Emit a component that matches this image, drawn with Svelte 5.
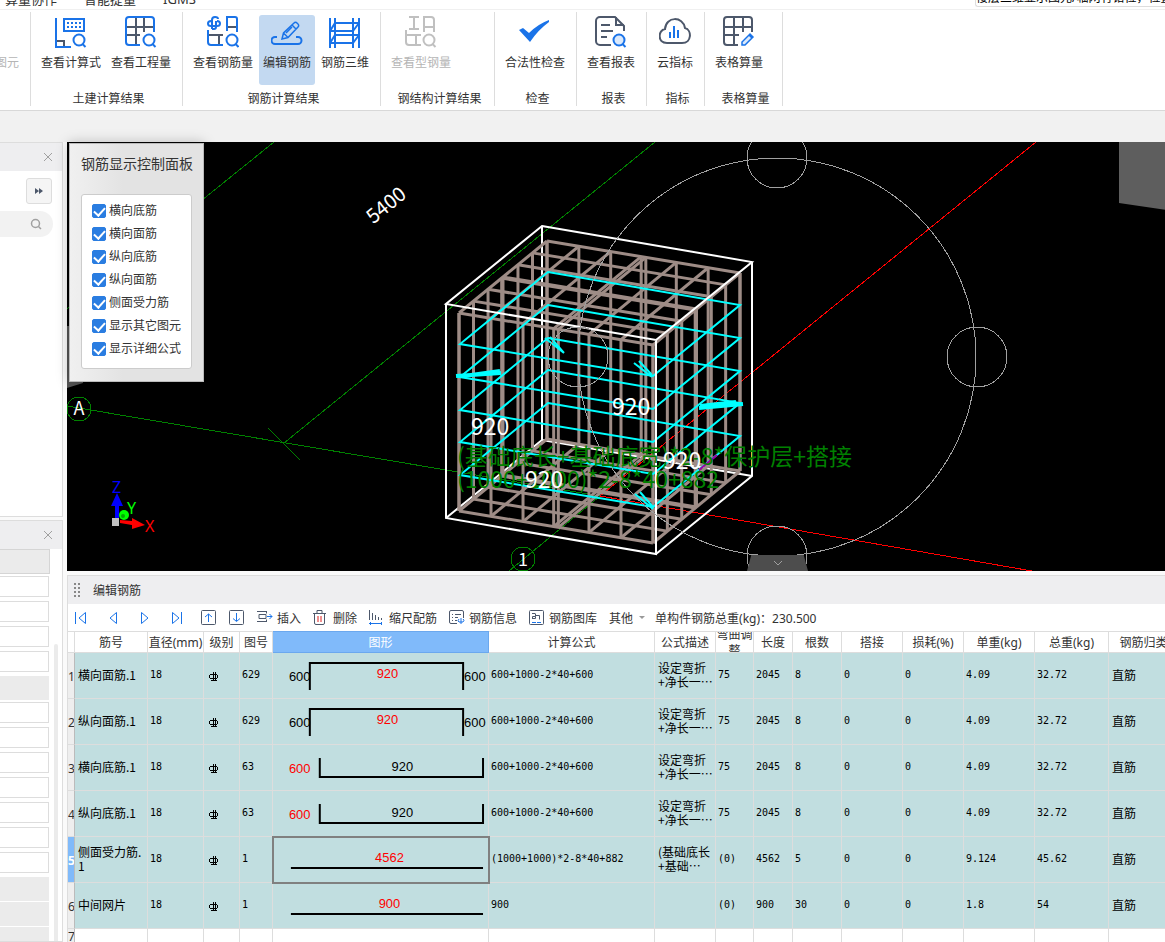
<script>
  const ribbonGroups = [
    { label: '土建计算结果', width: 152, items: [
      { label: '查看计算式', icon: 'formula' },
      { label: '查看工程量', icon: 'quantity' }
    ] },
    { label: '钢筋计算结果', width: 198, items: [
      { label: '查看钢筋量', icon: 'rebar' },
      { label: '编辑钢筋', icon: 'edit', active: true },
      { label: '钢筋三维', icon: 'rebar3d' }
    ] },
    { label: '钢结构计算结果', width: 114, items: [
      { label: '查看型钢量', icon: 'steel', disabled: true }
    ] },
    { label: '检查', width: 82, items: [{ label: '合法性检查', icon: 'check' }] },
    { label: '报表', width: 70, items: [{ label: '查看报表', icon: 'report' }] },
    { label: '指标', width: 58, items: [{ label: '云指标', icon: 'cloud' }] },
    { label: '表格算量', width: 78, items: [{ label: '表格算量', icon: 'sheet' }] }
  ];

  let layers = $state([
    { label: '横向底筋', on: true },
    { label: '横向面筋', on: true },
    { label: '纵向底筋', on: true },
    { label: '纵向面筋', on: true },
    { label: '侧面受力筋', on: true },
    { label: '显示其它图元', on: true },
    { label: '显示详细公式', on: true }
  ]);

  // property grid: i = input, g = group heading
  const props = ['i', 'i', 'i', 'i', 'g', 'i', 'i', 'i', 'i', 'i', 'i', 'i', 'g', 'g', 'g'];

  const tools = [
    { label: '插入', icon: 'insert' },
    { label: '删除', icon: 'remove' },
    { label: '缩尺配筋', icon: 'scale' },
    { label: '钢筋信息', icon: 'info' },
    { label: '钢筋图库', icon: 'library' }
  ];

  const columns = [
    { title: '', width: 7 },
    { title: '筋号', width: 73 },
    { title: '直径(mm)', width: 56 },
    { title: '级别', width: 36 },
    { title: '图号', width: 33 },
    { title: '图形', width: 216, current: true },
    { title: '计算公式', width: 166 },
    { title: '公式描述', width: 61 },
    { title: '弯曲调整', width: 38 },
    { title: '长度', width: 39 },
    { title: '根数', width: 49 },
    { title: '搭接', width: 61 },
    { title: '损耗(%)', width: 61 },
    { title: '单重(kg)', width: 71 },
    { title: '总重(kg)', width: 74 },
    { title: '钢筋归类', width: 70 }
  ];

  const straight = '600+1000-2*40+600';
  const rows = [
    { name: '横向面筋.1', code: '629', value: '920', formula: straight, desc: ['设定弯折', '+净长一…'], bend: '75', length: '2045', count: '8', unit: '4.09', total: '32.72' },
    { name: '纵向面筋.1', code: '629', value: '920', formula: straight, desc: ['设定弯折', '+净长一…'], bend: '75', length: '2045', count: '8', unit: '4.09', total: '32.72' },
    { name: '横向底筋.1', code: '63', value: '920', formula: straight, desc: ['设定弯折', '+净长一…'], bend: '75', length: '2045', count: '8', unit: '4.09', total: '32.72' },
    { name: '纵向底筋.1', code: '63', value: '920', formula: straight, desc: ['设定弯折', '+净长一…'], bend: '75', length: '2045', count: '8', unit: '4.09', total: '32.72' },
    { name: '侧面受力筋.1', code: '1', value: '4562', formula: '(1000+1000)*2-8*40+882', desc: ['(基础底长', '+基础…'], bend: '(0)', length: '4562', count: '5', unit: '9.124', total: '45.62', selected: true },
    { name: '中间网片', code: '1', value: '900', formula: '900', desc: [], bend: '(0)', length: '900', count: '30', unit: '1.8', total: '54' }
  ];

  // rebar cage, built from its four top corners
  const a = [547, 241];
  const b = [740, 273];
  const c = [653, 345];
  const d = [459, 313];
  const drop = 198;
  const lerp = (p, q, t) => [p[0] + (q[0] - p[0]) * t, p[1] + (q[1] - p[1]) * t];
  const longSteps = [0, 0.165, 0.33, 0.488, 0.512, 0.67, 0.835, 1];
  const sideSteps = [0, 0.165, 0.33, 0.5, 0.515, 0.67, 0.835, 1];

  const bars = [];
  for (const t of longSteps) {
    const back = lerp(a, b, t);
    const front = lerp(d, c, t);
    for (const y of [0, drop]) {
      bars.push([back[0], back[1] + y, front[0], front[1] + y]);
    }
    bars.push([...back, back[0], back[1] + drop], [...front, front[0], front[1] + drop]);
  }
  for (const t of sideSteps) {
    const left = lerp(a, d, t);
    const right = lerp(b, c, t);
    for (const y of [0, drop]) {
      bars.push([left[0], left[1] + y, right[0], right[1] + y]);
    }
    bars.push([...left, left[0], left[1] + drop], [...right, right[0], right[1] + drop]);
  }

  const hoops = [0, 1, 2, 3, 4].map((i) => {
    const y = Math.round(i * 32.8);
    return `548,${272 + y} 740,${305 + y} 653,${376 + y} 460,${344 + y}`;
  });
</script>

{#snippet lens(x, y)}
  <circle cx={x} cy={y} r="5.5" />
  <path d="M{x + 3.5} {y + 4}l3 3" />
{/snippet}

{#snippet ribbonIcon(name)}
  <svg class="big-icon" viewBox="0 0 32 32" aria-hidden="true">
    {#if name === 'formula'}
      <g class="blue">
        <path d="M1 2v29h15M9 3h20v12H9z" />
        <path stroke-dasharray="2 2" d="M12 7h14M12 11h14" />
        {@render lens(24, 24)}
      </g>
      <path class="dark" d="M2 25h7v5" />
    {:else if name === 'quantity'}
      <path class="dark" d="M11 2v26M19 2v14M2 11h27M2 19h13" />
      <g class="blue">
        <path d="M15 29H4a3 3 0 0 1-3-3V4a3 3 0 0 1 3-3h22a3 3 0 0 1 3 3v12" />
        {@render lens(24, 24)}
      </g>
    {:else if name === 'rebar'}
      <path class="dark" d="M20 11h10M2 19h14M12 19v10" />
      <g class="blue">
        <path d="M5 13V4q0-3 3-3t3 2M5 13h2q2 0 2-2V5M4 5Q1 5 1 7.500T4 10h6q3 0 3-2.500T10 5" />
        <path d="M20 15V1h8a2 2 0 0 1 2 2v13M1 14v12a3 3 0 0 0 3 3h12" />
        {@render lens(25, 24)}
      </g>
    {:else if name === 'edit'}
      <g class="blue">
        <path d="M6 21H4a3 3 0 0 0 0 7h23a3 3 0 0 0 0-7h-2" />
        <path class="thin" d="M11 23l1.500-6L23 7a2 2 0 0 1 3 0l1 1a2 2 0 0 1 0 3L17 21.500zM21 9l4 4M12.500 17l4 4M15 17l6-6" />
      </g>
    {:else if name === 'rebar3d'}
      <path class="blue" d="M1 2v30M6 2v30M24 2v30M30 2v30M6 7h24M1 15h24M6 19h24M1 27h24M1 15l5-8M1 27l5-8M24 15l6-8M24 27l6-8" />
    {:else if name === 'steel'}
      <g class="faded">
        <path d="M4 1h10M9 1v12M4 13h10M19 16V1h7a3 3 0 0 1 3 3v12M19 11h10M1 14v12a3 3 0 0 0 3 3h12M1 19h15M11 19v10" />
        {@render lens(24, 24)}
      </g>
    {:else if name === 'check'}
      <path fill="#1a73e8" d="M0 14l4-2 6 5Q19 8 30 4v2Q19 14 11 26z" />
    {:else if name === 'report'}
      <path class="dark" d="M16 29H5a4 4 0 0 1-4-4V5a4 4 0 0 1 4-4h15l9 9v5M21 1v8h8M6 9h9M6 15h12M6 21h6" />
      <g class="blue tinted">{@render lens(24, 24)}</g>
    {:else if name === 'cloud'}
      <path class="dark" d="M8 27C-2 27-1 14 6 13 7 0 24 0 26 12c7 2 7 15-3 15z" />
      <path class="blue" d="M11 16v6M15 10v12M19 14v8" />
    {:else if name === 'sheet'}
      <path class="dark" d="M15 29H4a3 3 0 0 1-3-3V4a3 3 0 0 1 3-3h22a3 3 0 0 1 3 3v12M11 2v26M20 2v14M2 11h27M2 19h14" />
      <path class="blue thin" fill="#dbe9fb" d="M19 29v-3l8-8 3 3-8 8zM26 19l3 3" />
    {/if}
  </svg>
{/snippet}

{#snippet toolIcon(name)}
  <svg class="small-icon" viewBox="0 0 16 16" aria-hidden="true">
    {#if name === 'first'}
      <path class="nav" d="M2.500 2v12M12.500 2.500v11L6 8z" />
    {:else if name === 'prev'}
      <path class="nav" d="M11.500 2.500v11L5 8z" />
    {:else if name === 'next'}
      <path class="nav" d="M4.500 2.500v11L11 8z" />
    {:else if name === 'last'}
      <path class="nav" d="M12.500 2v12M3.500 2.500v11L10 8z" />
    {:else if name === 'up'}
      <rect class="line" x="0.500" y="0.500" width="14" height="14" rx="1" />
      <path class="nav" d="M7.500 12V4M4 7l3.500-3L11 7" />
    {:else if name === 'down'}
      <rect class="line" x="0.500" y="0.500" width="14" height="14" rx="1" />
      <path class="nav" d="M7.500 3v8M4 8.500l3.500 3 3.500-3" />
    {:else if name === 'insert'}
      <path class="line" d="M0 1.500h10M0 11.500h10M2 4.500h7v4H2zM9.500 1.500v2M9.500 9.500v2" />
      <path class="nav" d="M10 6.500h5M12.500 4l2.500 2.500L12.500 9" />
    {:else if name === 'remove'}
      <path class="line" d="M0 3.500h13M4 3V.500h5V3M1.500 4v9a1.500 1.500 0 0 0 1.500 1.500h7a1.500 1.500 0 0 0 1.500-1.500V4" />
      <path class="danger" d="M5 6v6M8 6v6" />
    {:else if name === 'scale'}
      <path class="line" d="M.500 0v10M3.500 3v7M6.500 5v5M9.500 7v3M12.500 8v2" />
      <path class="nav" d="M0 13.500h13M1.500 12v3M12.500 12v3" />
    {:else if name === 'info'}
      <path class="line" d="M8 13.500H2a1.500 1.500 0 0 1-1.500-1.500V2A1.500 1.500 0 0 1 2 .500h11A1.500 1.500 0 0 1 14.500 2v6M3 4.500h1M6 4.500h6M3 7.500h1M6 7.500h3M3 10.500h1M6 10.500h2" />
      <path class="nav" d="M12 8v6M10 9q-2 2 0 3h4q2-2 0-3" />
    {:else if name === 'library'}
      <rect class="line" x="0.500" y="0.500" width="14" height="14" rx="1" />
      <path class="line" d="M3 3.500h3M3.500 9V6.500h3v-3M3.500 8.500h3v-2M6.500 5.500h4v4" />
      <path class="nav" stroke-dasharray="4 1" d="M3 12.500h9" />
    {/if}
  </svg>
{/snippet}

{#snippet shape(row)}
  <svg class="shape" viewBox="0 0 216 45" role="img" aria-label="图形 {row.value}">
    {#if row.code === '629'}
      <path d="M37 37V10h154v27" />
      <text x="16" y="28">600</text>
      <text class="key" x="115" y="25" text-anchor="middle">{row.value}</text>
      <text x="192" y="28">600</text>
    {:else if row.code === '63'}
      <path d="M47 13v19h164V13" />
      <text class="key" x="16" y="28">600</text>
      <text x="130" y="26" text-anchor="middle">{row.value}</text>
    {:else}
      <path d="M18 31h193" />
      <text class="key" x="117" y="25" text-anchor="middle">{row.value}</text>
    {/if}
  </svg>
{/snippet}

<div class="app">
  <nav class="menu">
    <a href="#collab">算量协作</a>
    <a href="#smart">智能提量</a>
    <a href="#igms">IGMS</a>
    <span class="hint">楼层三维显示图元/轴网有错位，位置</span>
  </nav>

  <header class="ribbon">
    <div class="group clipped"><button class="big" disabled>图元</button></div>
    {#each ribbonGroups as group}
      <div class="group" style:width="{group.width}px">
        <div class="group-items">
          {#each group.items as item}
            <button class="big" class:active={item.active} disabled={item.disabled}>
              {@render ribbonIcon(item.icon)}
              <span>{item.label}</span>
            </button>
          {/each}
        </div>
        <div class="group-label">{group.label}</div>
      </div>
    {/each}
  </header>

  <main>
    <aside>
      <section class="dock list-dock">
        <div class="dock-head">
          <button class="close" aria-label="关闭"><svg viewBox="0 0 10 10"><path d="M1 1l8 8M9 1L1 9" /></svg></button>
        </div>
        <button class="expand" aria-label="展开">
          <svg viewBox="0 0 8 6"><path d="M0 0l4 3-4 3zM4 0l4 3-4 3z" /></svg>
        </button>
        <div class="search">
          <svg viewBox="0 0 12 12" aria-hidden="true"><circle cx="5.500" cy="5.500" r="4" /><path d="M8.500 8.500l2.500 2.500" /></svg>
        </div>
      </section>
      <section class="dock prop-dock">
        <div class="dock-head">
          <button class="close" aria-label="关闭"><svg viewBox="0 0 10 10"><path d="M1 1l8 8M9 1L1 9" /></svg></button>
        </div>
        <div class="prop-body">
          <div class="props">
            <div class="prop-title"></div>
            {#each props as kind}
              {#if kind === 'i'}
                <input class="prop" type="text" aria-label="属性值" />
              {:else}
                <div class="prop-group"></div>
              {/if}
            {/each}
          </div>
          <div class="scroll"></div>
        </div>
      </section>
    </aside>

    <div class="work">
      <div class="viewport">
        <svg class="scene" viewBox="67 142 1098 429" preserveAspectRatio="xMinYMin slice">
          <path fill="#5e5e5e" d="M1119 142h600v150l-600-89z" />
          <path fill="#555" d="M67 326h16v57l-16 5z" />

          <g class="axis">
            <path d="M274 142L67 309M655 142L284 443M268 428l32 32M67 406l533 90L509 571" />
            <circle cx="79" cy="409" r="12" />
            <circle cx="523" cy="559" r="12" />
          </g>
          <path class="origin" d="M1036 142L600 496l432 75" />
          <path class="box" d="M542 226v214M542 440l210 36M542 440l-96 78" />

          <g class="cage">
            {#each bars as [x1, y1, x2, y2]}
              <line {x1} {y1} {x2} {y2} />
            {/each}
          </g>
          <g class="hoops">
            {#each hoops as points}
              <polygon {points} />
            {/each}
            <path d="M545 338l19 15M550 337l14 16M634 363l18 14M639 361l13 14M635 494l18 15M640 492l13 15" />
            <path class="hook" d="M456 376l45-3M699 408l44-4M464 376l36-5M700 406l36-4" />
          </g>
          <path stroke="#a000a0" stroke-width="2" d="M699 470l18-15" />
          <path class="box" d="M542 226l210 36-96 78-210-36zM446 304v214l210 36V340M656 554l96-78V262" />

          <g class="orbit">
            <circle cx="777" cy="357" r="199" />
            <circle cx="777" cy="158" r="30" />
            <circle cx="977" cy="357" r="30" />
            <circle cx="777" cy="556" r="30" />
            <circle cx="578" cy="357" r="30" />
          </g>

          <g class="formula-text">
            <text x="457" y="465">(基础底长+基础底宽)*2-8*保护层+搭接</text>
            <text x="457" y="488">(1000+1000)*2-8*40+882</text>
          </g>
          <g class="dim">
            <text x="471" y="435">920</text>
            <text x="612" y="415">920</text>
            <text x="525" y="488">920</text>
            <text x="663" y="469">920</text>
            <text class="tag" x="79" y="415">A</text>
            <text class="tag" x="523" y="566">1</text>
            <text class="span" transform="translate(386 205) rotate(-39)" y="7">5400</text>
          </g>

          <g class="gizmo">
            <path fill="#00f" d="M115 519v-13h-4l6-13 6 13h-4v13z" />
            <circle cx="124" cy="515" r="5" fill="#0f0" />
            <circle cx="123" cy="516" r="2" fill="#0a0" />
            <path fill="#f00" d="M120 520l12 1v-3l13 7-13 4v-4l-12-2z" />
            <path fill="#c0c0c0" d="M112 518h7v8h-7z" />
            <text x="112" y="493" fill="#00f">Z</text>
            <text x="127" y="514" fill="#0f0">Y</text>
            <text x="145" y="532" fill="#f00">X</text>
          </g>
        </svg>

        <div class="panel">
          <h2>钢筋显示控制面板</h2>
          <div class="layers">
            {#each layers as layer}
              <label><input type="checkbox" bind:checked={layer.on} />{layer.label}</label>
            {/each}
          </div>
        </div>

        <button class="fold" aria-label="收起">
          <svg viewBox="0 0 10 6"><path d="M1 1l4 4 4-4" /></svg>
        </button>
      </div>

      <section class="editor">
        <div class="editor-head">
          <svg class="grip" viewBox="0 0 6 14" aria-hidden="true">
            <path d="M0 0h2v2H0zM4 0h2v2H4zM0 4h2v2H0zM4 4h2v2H4zM0 8h2v2H0zM4 8h2v2H4zM0 12h2v2H0zM4 12h2v2H4z" />
          </svg>
          <span>编辑钢筋</span>
        </div>

        <div class="toolbar">
          <div class="navs">
            <button aria-label="第一条">{@render toolIcon('first')}</button>
            <button aria-label="上一条">{@render toolIcon('prev')}</button>
            <button aria-label="下一条">{@render toolIcon('next')}</button>
            <button aria-label="最后一条">{@render toolIcon('last')}</button>
            <button aria-label="上移">{@render toolIcon('up')}</button>
          </div>
          <button aria-label="下移">{@render toolIcon('down')}</button>
          {#each tools as tool}
            <button>{@render toolIcon(tool.icon)}<span>{tool.label}</span></button>
          {/each}
          <button class="more"><span>其他</span><i class="caret"></i></button>
          <span class="sum">单构件钢筋总重(kg)：230.500</span>
        </div>

        <div class="grid-wrap">
          <table>
            <colgroup>
              {#each columns as col}
                <col style:width="{col.width}px" />
              {/each}
            </colgroup>
            <thead>
              <tr>
                {#each columns as col}
                  <th class:current={col.current}><div>{col.title}</div></th>
                {/each}
              </tr>
            </thead>
            <tbody>
              {#each rows as row, i}
                <tr>
                  <th class:current={row.selected}>{i + 1}</th>
                  <td class="zh">{row.name}</td>
                  <td>18</td>
                  <td class="grade">
                    <svg viewBox="0 0 9 9" role="img" aria-label="三级钢"><path d="M4.500 0v8M6.500 0v8M2 8.500h6M1.500 2.500h6l1 1v2l-1 1h-6l-1-1v-2z" /></svg>
                  </td>
                  <td>{row.code}</td>
                  <td class="figure" class:selected={row.selected}>{@render shape(row)}</td>
                  <td>{row.formula}</td>
                  <td class="zh">{#each row.desc as line}<div>{line}</div>{/each}</td>
                  <td>{row.bend}</td>
                  <td>{row.length}</td>
                  <td>{row.count}</td>
                  <td>0</td>
                  <td>0</td>
                  <td>{row.unit}</td>
                  <td>{row.total}</td>
                  <td class="zh">直筋</td>
                </tr>
              {/each}
              <tr class="blank">
                <th>7</th>
                {#each columns.slice(1) as _}<td></td>{/each}
              </tr>
            </tbody>
          </table>
        </div>
      </section>
    </div>
  </main>
</div>

<style>
  :global(body) {
    margin: 0;
  }

  * {
    box-sizing: border-box;
  }

  .app {
    display: flex;
    flex-direction: column;
    height: 100vh;
    overflow: hidden;
    background: #f1f1f1;
    color: #333;
    font: 12px/16px 'Noto Sans', 'Noto Sans CJK SC', sans-serif;
  }

  button {
    padding: 0;
    border: none;
    background: none;
    color: inherit;
    font: inherit;
  }

  svg {
    display: block;
    fill: none;
  }

  /* menu strip */
  .menu {
    flex: none;
    display: flex;
    align-items: flex-end;
    gap: 27px;
    height: 10px;
    padding: 0 0 2px 5px;
    border-bottom: 1px solid #f0f0f0;
    background: #fff;
    font-size: 13px;
    white-space: nowrap;
    overflow: hidden;
  }

  .menu a {
    color: #333;
    text-decoration: none;
  }

  .hint {
    width: 190px;
    margin-left: auto;
    border: 1px solid #ddd;
    border-right: none;
    border-radius: 3px 0 0 3px;
    color: #000;
    font-size: 12px;
  }

  /* ribbon */
  .ribbon {
    flex: none;
    display: flex;
    height: 101px;
    padding: 2px 0 4px;
    border-bottom: 1px solid #d8d8d8;
    background: #fff;
  }

  .group {
    display: flex;
    flex-direction: column;
    flex: none;
    padding: 3px 0 0 6px;
    border-right: 1px solid #ddd;
  }

  .clipped {
    align-items: flex-end;
    width: 31px;
    overflow: hidden;
  }

  .group-items {
    display: flex;
    gap: 2px;
  }

  .big {
    display: flex;
    flex-direction: column;
    align-items: center;
    gap: 7px;
    height: 70px;
    padding: 1px 4px 0;
    border-radius: 3px;
    white-space: nowrap;
  }

  .clipped .big {
    padding-top: 40px;
    padding-right: 11px;
  }

  .big.active {
    background: #c3d9f1;
  }

  .big:disabled {
    color: #b5b5b5;
  }

  .big-icon {
    width: 32px;
    height: 32px;
    stroke-width: 2;
  }

  .blue {
    stroke: #1a73e8;
  }

  .dark {
    stroke: #4d586b;
  }

  .faded {
    stroke: #c0c0c0;
  }

  .thin {
    stroke-width: 1.5;
  }

  .tinted {
    fill: #dbe9fb;
  }

  .group-label {
    margin-top: 6px;
    padding-right: 2px;
    text-align: center;
  }

  /* side docks */
  main {
    flex: 1;
    display: flex;
    min-height: 0;
    margin-top: 31px;
    background: #fafafa;
  }

  aside {
    flex: none;
    display: flex;
    flex-direction: column;
    gap: 3px;
    width: 63px;
    margin-right: 4px;
  }

  .dock {
    border: 1px solid #ddd;
    border-left: none;
    background: #fff;
    overflow: hidden;
  }

  .list-dock {
    height: 375px;
  }

  .prop-dock {
    flex: 1;
    display: flex;
    flex-direction: column;
  }

  .dock-head {
    flex: none;
    display: flex;
    justify-content: flex-end;
    align-items: center;
    height: 28px;
    padding-right: 9px;
    background: #eeeef0;
  }

  .close svg {
    width: 10px;
    height: 10px;
    stroke: #a0a0a0;
  }

  .expand {
    display: flex;
    align-items: center;
    justify-content: center;
    width: 26px;
    height: 26px;
    margin: 7px 10px 7px auto;
    border: 1px solid #ddd;
    border-radius: 3px;
    background: #f5f5f5;
  }

  .expand svg {
    width: 8px;
    height: 6px;
    fill: #4d586b;
  }

  .search {
    display: flex;
    align-items: center;
    justify-content: flex-end;
    height: 26px;
    margin-right: 9px;
    padding-right: 11px;
    border-radius: 0 13px 13px 0;
    background: #f2f2f2;
  }

  .search svg {
    width: 12px;
    height: 12px;
    stroke: #a0a0a0;
    stroke-width: 1.5;
  }

  .prop-body {
    display: flex;
    gap: 4px;
    min-height: 0;
    overflow: hidden;
  }

  .props {
    width: 50px;
  }

  .prop-title {
    height: 25px;
    margin-bottom: 1px;
    border: 1px solid #d5d5d5;
    border-left: none;
    background: #ebebeb;
  }

  .prop {
    display: block;
    width: 49px;
    height: 21px;
    margin: 2px 0 4px;
    border: 1px solid #ddd;
    border-left: none;
    background: #fff;
  }

  .prop-group {
    width: 49px;
    height: 24px;
    margin-bottom: 1px;
    background: #ebebeb;
  }

  .scroll {
    width: 4px;
    margin-top: 95px;
    border-radius: 2px 2px 0 0;
    background: #ebebeb;
  }

  /* 3D view */
  .work {
    flex: 1;
    display: flex;
    flex-direction: column;
    min-width: 0;
  }

  .viewport {
    position: relative;
    flex: 1;
    min-height: 0;
    background: #000;
  }

  .scene {
    width: 100%;
    height: 100%;
  }

  .axis {
    stroke: #008000;
    shape-rendering: crispEdges;
  }

  .origin {
    stroke: #f00;
    shape-rendering: crispEdges;
  }

  .box {
    stroke: #fff;
    stroke-width: 2;
  }

  .cage {
    stroke: #9e8c86;
    stroke-width: 3;
  }

  .hoops {
    stroke: #0ff;
    stroke-width: 2;
  }

  .hook {
    stroke-width: 4;
  }

  .orbit {
    stroke: #a0a0a0;
    shape-rendering: crispEdges;
  }

  .formula-text,
  .dim {
    fill: #fff;
    font: 400 23px 'Noto Sans CJK SC', sans-serif;
  }

  .formula-text {
    fill: #008000;
  }

  .dim .tag,
  .dim .span {
    font-size: 18px;
    text-anchor: middle;
  }

  .dim .span {
    font-size: 20px;
  }

  .gizmo text {
    font: 16px 'Noto Sans', sans-serif;
  }

  .panel {
    position: absolute;
    top: 1px;
    left: 2px;
    width: 135px;
    padding: 10px 11px 12px;
    border: 1px solid #bbb;
    background: linear-gradient(90deg, #f0f0f0, #e3e3e3 40%);
    box-shadow: 0 0 12px rgba(0, 0, 0, 0.25);
  }

  .panel h2 {
    margin: 0 0 20px;
    font-size: 14px;
    font-weight: 400;
    line-height: 20px;
    white-space: nowrap;
  }

  .layers {
    display: flex;
    flex-direction: column;
    padding: 5px 0 7px 10px;
    border: 1px solid #ccc;
    border-radius: 3px;
    background: #fff;
  }

  .layers label {
    display: flex;
    align-items: center;
    gap: 3px;
    height: 23px;
    padding-bottom: 1px;
    white-space: nowrap;
  }

  .layers input {
    appearance: none;
    display: flex;
    justify-content: center;
    width: 14px;
    height: 14px;
    margin: 0;
    border: 1px solid #2a7de1;
    border-radius: 2px;
    background: #fff;
  }

  .layers input:checked {
    background: #2a7de1;
  }

  .layers input:checked::before {
    content: '';
    width: 5px;
    height: 9px;
    border: solid #fff;
    border-width: 0 2px 2px 0;
    transform: rotate(42deg);
  }

  .fold {
    position: absolute;
    bottom: 0;
    left: 680px;
    display: flex;
    align-items: center;
    justify-content: center;
    width: 61px;
    height: 16px;
    background: #4d4d4d;
    clip-path: polygon(7% 0, 93% 0, 100% 100%, 0 100%);
  }

  .fold svg {
    width: 10px;
    height: 6px;
    stroke: #a0a0a0;
  }

  /* rebar editor */
  .editor {
    flex: none;
    display: flex;
    flex-direction: column;
    height: 367px;
    margin-top: 4px;
    border: 1px solid #ddd;
    border-width: 1px 0 0 1px;
    background: #fff;
  }

  .editor-head {
    flex: none;
    display: flex;
    align-items: center;
    gap: 13px;
    height: 28px;
    padding-left: 6px;
    background: #eeeef0;
  }

  .editor-head span,
  .toolbar span {
    padding-top: 2px;
  }

  .grip {
    width: 6px;
    height: 14px;
    fill: #888;
  }

  .toolbar {
    flex: none;
    display: flex;
    align-items: center;
    gap: 12px;
    height: 27px;
    padding-left: 5px;
    white-space: nowrap;
  }

  .navs {
    display: flex;
    gap: 16px;
  }

  .toolbar button {
    display: flex;
    align-items: center;
    gap: 4px;
  }

  .small-icon {
    width: 16px;
    height: 16px;
  }

  .nav {
    stroke: #1a73e8;
  }

  .line {
    stroke: #4d586b;
  }

  .danger {
    stroke: #e02020;
  }

  .toolbar .more {
    gap: 6px;
  }

  .caret {
    border: 3px solid transparent;
    border-top-color: #999;
    border-bottom: none;
  }

  .sum {
    margin-left: -2px;
  }

  .grid-wrap {
    flex: 1;
    min-height: 0;
    overflow: hidden;
  }

  table {
    width: 1111px;
    min-width: 100%;
    table-layout: fixed;
    border-collapse: separate;
    border-spacing: 0;
  }

  th,
  td {
    padding: 0;
    border: 1px solid #ddd;
    border-width: 0 1px 1px 0;
  }

  th {
    font-weight: 400;
  }

  thead th {
    height: 22px;
    border-top-width: 1px;
  }

  thead div {
    display: flex;
    align-items: center;
    justify-content: center;
    height: 20px;
    padding-top: 2px;
    overflow: hidden;
    text-align: center;
  }

  thead th.current {
    border-color: #6ba8ee;
    background: #80bafa;
    color: #fff;
  }

  tbody td {
    height: 46px;
    padding: 0 2px 2px;
    background: #c1dee0;
    color: #000;
    font: 10px/14px 'DejaVu Sans Mono', 'Noto Sans CJK SC', monospace;
    white-space: nowrap;
  }

  tbody th {
    padding-top: 2px;
    border-right-color: #bbb;
    background: #eee;
    overflow: hidden;
  }

  tbody th.current {
    background: #80bafa;
    color: #fff;
    font-weight: 700;
  }

  tbody .zh {
    padding: 0 0 2px 3px;
    font-family: 'Noto Sans CJK SC', sans-serif;
    font-size: 12px;
    white-space: normal;
    word-break: break-all;
  }

  tbody .grade {
    padding: 1px 0 0 5px;
  }

  .grade svg {
    width: 9px;
    height: 9px;
    stroke: #000;
    shape-rendering: crispEdges;
  }

  tbody .figure {
    padding: 0;
  }

  .figure.selected {
    outline: 2px solid #808080;
    outline-offset: -1px;
  }

  .shape {
    width: 100%;
    height: 45px;
  }

  .shape path {
    stroke: #000;
    stroke-width: 2;
  }

  .shape text {
    fill: #000;
    font: 13px 'Liberation Sans', sans-serif;
  }

  .shape .key {
    fill: #f00;
  }

  .blank td {
    background: #fff;
  }

  .blank th {
    padding-top: 0;
    vertical-align: top;
  }
</style>
